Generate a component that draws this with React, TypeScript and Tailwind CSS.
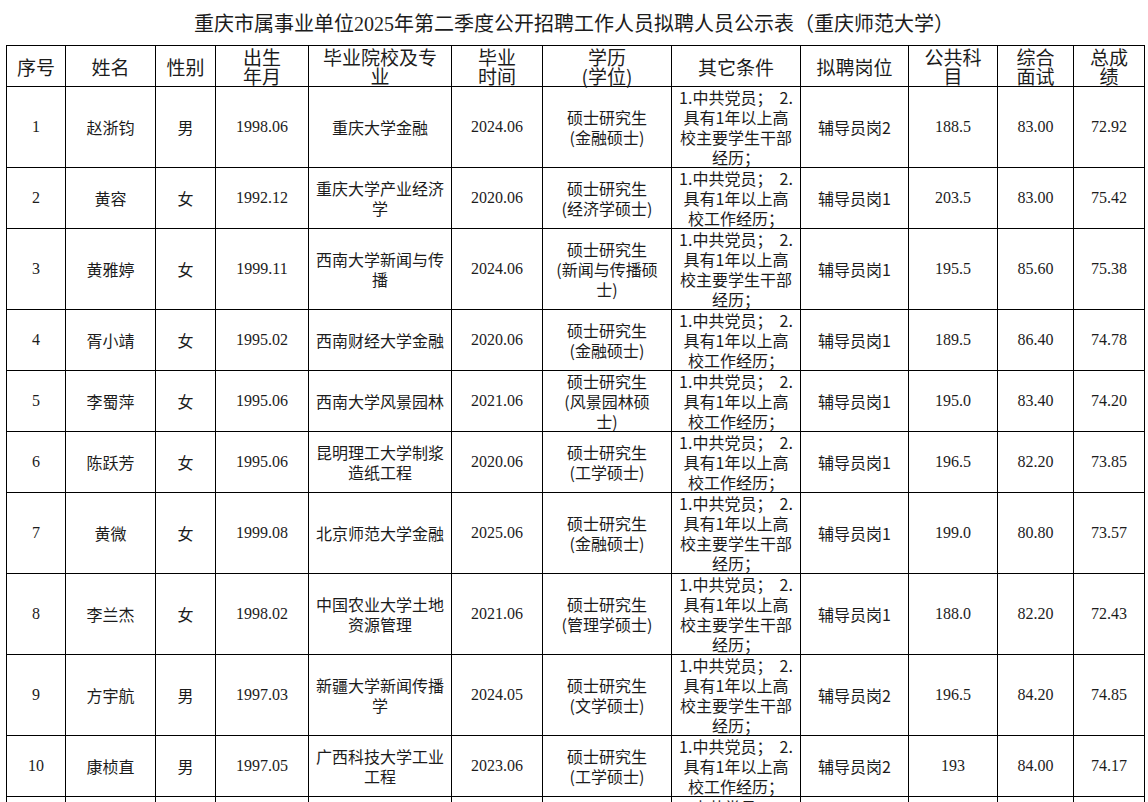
import React from 'react';

type Row = {
  no: string;
  name: string;
  sex: string;
  birth: string;
  school: string[];
  grad: string;
  degree: string[];
  cond: string[];
  post: string;
  pub: string;
  interview: string;
  total: string;
};

const PARTY = '1.中共党员；  2.';
const leader = [PARTY, '具有1年以上高', '校主要学生干部', '经历；'];
const work = [PARTY, '具有1年以上高', '校工作经历；'];

const rows: Row[] = [
  { no: '1', name: '赵浙钧', sex: '男', birth: '1998.06', school: ['重庆大学金融'], grad: '2024.06', degree: ['硕士研究生', '(金融硕士)'], cond: leader, post: '辅导员岗2', pub: '188.5', interview: '83.00', total: '72.92' },
  { no: '2', name: '黄容', sex: '女', birth: '1992.12', school: ['重庆大学产业经济', '学'], grad: '2020.06', degree: ['硕士研究生', '(经济学硕士)'], cond: work, post: '辅导员岗1', pub: '203.5', interview: '83.00', total: '75.42' },
  { no: '3', name: '黄雅婷', sex: '女', birth: '1999.11', school: ['西南大学新闻与传', '播'], grad: '2024.06', degree: ['硕士研究生', '(新闻与传播硕', '士)'], cond: leader, post: '辅导员岗1', pub: '195.5', interview: '85.60', total: '75.38' },
  { no: '4', name: '胥小靖', sex: '女', birth: '1995.02', school: ['西南财经大学金融'], grad: '2020.06', degree: ['硕士研究生', '(金融硕士)'], cond: work, post: '辅导员岗1', pub: '189.5', interview: '86.40', total: '74.78' },
  { no: '5', name: '李蜀萍', sex: '女', birth: '1995.06', school: ['西南大学风景园林'], grad: '2021.06', degree: ['硕士研究生', '(风景园林硕', '士)'], cond: work, post: '辅导员岗1', pub: '195.0', interview: '83.40', total: '74.20' },
  { no: '6', name: '陈跃芳', sex: '女', birth: '1995.06', school: ['昆明理工大学制浆', '造纸工程'], grad: '2020.06', degree: ['硕士研究生', '(工学硕士)'], cond: work, post: '辅导员岗1', pub: '196.5', interview: '82.20', total: '73.85' },
  { no: '7', name: '黄微', sex: '女', birth: '1999.08', school: ['北京师范大学金融'], grad: '2025.06', degree: ['硕士研究生', '(金融硕士)'], cond: leader, post: '辅导员岗1', pub: '199.0', interview: '80.80', total: '73.57' },
  { no: '8', name: '李兰杰', sex: '女', birth: '1998.02', school: ['中国农业大学土地', '资源管理'], grad: '2021.06', degree: ['硕士研究生', '(管理学硕士)'], cond: leader, post: '辅导员岗1', pub: '188.0', interview: '82.20', total: '72.43' },
  { no: '9', name: '方宇航', sex: '男', birth: '1997.03', school: ['新疆大学新闻传播', '学'], grad: '2024.05', degree: ['硕士研究生', '(文学硕士)'], cond: leader, post: '辅导员岗2', pub: '196.5', interview: '84.20', total: '74.85' },
  { no: '10', name: '康桢直', sex: '男', birth: '1997.05', school: ['广西科技大学工业', '工程'], grad: '2023.06', degree: ['硕士研究生', '(工学硕士)'], cond: work, post: '辅导员岗2', pub: '193', interview: '84.00', total: '74.17' },
  { no: '11', name: '王思远', sex: '男', birth: '1996.10', school: ['西南大学教育学'], grad: '2022.06', degree: ['硕士研究生', '(教育学硕士)'], cond: leader, post: '辅导员岗2', pub: '190.5', interview: '83.60', total: '73.90' },
];

const widths = ['w-[59px]', 'w-[90px]', 'w-[60px]', 'w-[93px]', 'w-[143px]', 'w-[91px]', 'w-[129px]', 'w-[129px]', 'w-[108px]', 'w-[89px]', 'w-[76px]', 'w-[71px]'];

const headers: string[][] = [
  ['序号'], ['姓名'], ['性别'], ['出生', '年月'], ['毕业院校及专', '业'], ['毕业', '时间'],
  ['学历', '(学位)'], ['其它条件'], ['拟聘岗位'], ['公共科', '目'], ['综合', '面试'], ['总成', '绩'],
];

const serif = "font-['Liberation_Serif','Times_New_Roman','Noto_Sans_CJK_SC',serif]";
const sans = "font-['Noto_Sans_CJK_SC','Noto_Sans',sans-serif]";

function Lines({ items }: { items: string[] }) {
  return (
    <>
      {items.map((t, i) => (
        <div key={i} className="whitespace-pre">{t}</div>
      ))}
    </>
  );
}

function Cell({ children, font }: { children: React.ReactNode; font: string }) {
  return (
    <td className={`border border-black p-0 text-center align-middle text-[16px] leading-5 ${font}`}>{children}</td>
  );
}

export default function App() {
  return (
    <div className="min-h-screen bg-white text-[#1c1c1c]">
      <div className={`flex h-[45px] items-center justify-center pt-[3px] text-[20px] ${serif}`}>
        重庆市属事业单位2025年第二季度公开招聘工作人员拟聘人员公示表（重庆师范大学）
      </div>
      <div className="pl-[6px]">
        <table className="w-[1139px] table-fixed border-collapse border border-black">
          <colgroup>
            {widths.map((w, i) => (
              <col key={i} className={w} />
            ))}
          </colgroup>
          <thead>
            <tr>
              {headers.map((h, i) => (
                <th key={i} className={`h-[40px] border border-black px-0 py-[1px] text-center align-middle text-[19px] font-normal leading-[19px] ${sans}`}>
                  <Lines items={h} />
                </th>
              ))}
            </tr>
          </thead>
          <tbody>
            {rows.map((r) => (
              <tr key={r.no}>
                <Cell font={serif}>{r.no}</Cell>
                <Cell font={sans}>{r.name}</Cell>
                <Cell font={sans}>{r.sex}</Cell>
                <Cell font={serif}>{r.birth}</Cell>
                <Cell font={sans}><Lines items={r.school} /></Cell>
                <Cell font={serif}>{r.grad}</Cell>
                <Cell font={sans}><Lines items={r.degree} /></Cell>
                <Cell font={sans}><Lines items={r.cond} /></Cell>
                <Cell font={sans}>{r.post}</Cell>
                <Cell font={serif}>{r.pub}</Cell>
                <Cell font={serif}>{r.interview}</Cell>
                <Cell font={serif}>{r.total}</Cell>
              </tr>
            ))}
          </tbody>
        </table>
      </div>
    </div>
  );
}
